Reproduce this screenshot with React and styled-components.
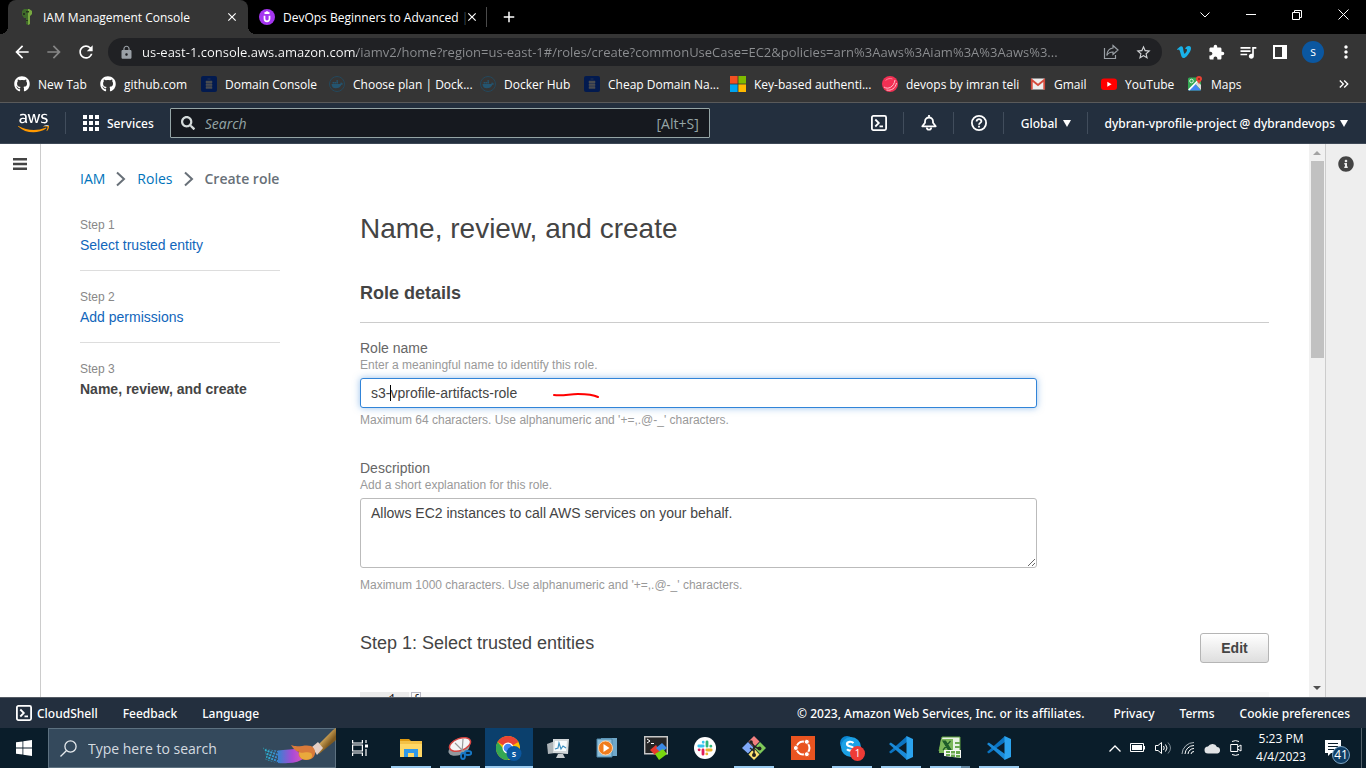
import React from "react";
import styled, { createGlobalStyle, css } from "styled-components";
import {
  MdArrowBack, MdArrowForward, MdRefresh, MdLock, MdStarBorder, MdExtension,
  MdQueueMusic, MdMoreVert, MdClose, MdAdd, MdKeyboardDoubleArrowRight,
} from "react-icons/md";
import { FaAws, FaGithub, FaVimeoV, FaInfoCircle, FaSearch } from "react-icons/fa";

const segoe = '"Open Sans", "Noto Sans", sans-serif';
const ember = '"Open Sans", "Noto Sans", sans-serif';
const emberMedium = '"Noto Sans", "Open Sans", sans-serif';
const arial = '"Liberation Sans", Arial, sans-serif';

const GlobalStyle = createGlobalStyle`
  *, *::before, *::after { box-sizing: border-box; }
  body { margin: 0; background: #fff; font-family: ${arial}; }
  button, input, textarea { font: inherit; color: inherit; margin: 0; }
  button { padding: 0; border: 0; background: none; cursor: pointer; }
  h1, h2, p { margin: 0; }
  svg { display: block; flex: none; }
`;

const Screen = styled.div`
  display: flex;
  flex-direction: column;
  height: 100vh;
  overflow: hidden;
`;

/* ---------- Browser chrome ---------- */

const TabStrip = styled.div`
  display: flex;
  align-items: stretch;
  height: 34px;
  padding-left: 8px;
  background: #000;
  color: #fff;
  font: 12px ${segoe};
`;

const Tab = styled.div`
  position: relative;
  display: flex;
  align-items: center;
  width: 240px;
  padding: 0 8px 0 11px;
  border-radius: 8px 8px 0 0;
  background: ${(p) => (p.$active ? "#353535" : "transparent")};
  > svg { margin-right: 8px; }
  ${(p) => p.$active && css`
    &::before, &::after {
      content: "";
      position: absolute;
      bottom: 0;
      width: 8px;
      height: 8px;
    }
    &::before { left: -8px; background: radial-gradient(circle at 0 0, transparent 8px, #353535 8px); }
    &::after { right: -8px; background: radial-gradient(circle at 100% 0, transparent 8px, #353535 8px); }
  `}
`;

const TabTitle = styled.span`
  flex: 1;
  min-width: 0;
  white-space: nowrap;
`;

const TitleTail = styled.span`
  color: #3c5058;
`;

const IconButton = styled.button`
  display: flex;
  align-items: center;
  justify-content: center;
  align-self: center;
  width: ${(p) => p.$w || 16}px;
  height: ${(p) => p.$w || 16}px;
  flex: none;
  color: ${(p) => p.$color || "#fff"};
`;

const TabDivider = styled.span`
  align-self: center;
  width: 1px;
  height: 20px;
  margin: 0 14px 0 -2px;
  background: #4a4a4a;
`;

const WindowControls = styled.div`
  display: flex;
  margin-left: auto;
  padding-bottom: 5px;
`;

const WindowButton = styled.button`
  display: flex;
  align-items: center;
  justify-content: center;
  width: 46px;
`;

const Toolbar = styled.div`
  display: flex;
  align-items: center;
  height: 34px;
  gap: 12px;
  padding: 2px 10px 0 12px;
  background: #353535;
`;

const AddressBar = styled.label`
  display: flex;
  align-items: center;
  flex: 1;
  min-width: 0;
  height: 28px;
  gap: 8px;
  padding: 0 10px 0 11px;
  border-radius: 14px;
  background: #202124;
  color: #9aa0a6;
`;

const AddressInput = styled.input`
  flex: 1;
  min-width: 0;
  padding: 0;
  border: 0;
  outline: 0;
  font: 13px/18px ${segoe};
  background: linear-gradient(90deg, #fff 215px, #8d8f92 215px);
  background-clip: text;
  -webkit-background-clip: text;
  -webkit-text-fill-color: transparent;
`;

const AddressActions = styled.span`
  display: flex;
  gap: 16px;
`;

const Extensions = styled.div`
  display: flex;
  align-items: center;
  gap: 12px;
`;

const Avatar = styled.button`
  width: 22px;
  height: 22px;
  border-radius: 50%;
  background: #0b57a0;
  color: #fff;
  font: 12px/22px ${segoe};
`;

const BookmarkBar = styled.nav`
  display: flex;
  align-items: center;
  justify-content: space-between;
  height: 35px;
  padding: 0 14px 2px;
  border-bottom: 1px solid #5a5a5a;
  background: #353535;
  color: #fff;
  font: 12px ${segoe};
`;

const Bookmarks = styled.div`
  display: flex;
`;

const Bookmark = styled.a`
  display: flex;
  align-items: center;
  gap: 8px;
  width: ${(p) => p.$w}px;
  flex: none;
  color: inherit;
  text-decoration: none;
  white-space: nowrap;
`;

/* ---------- AWS header ---------- */

const AwsHeader = styled.header`
  display: flex;
  align-items: center;
  height: 41px;
  flex: none;
  padding: 0 18px;
  border-bottom: 1px solid #3d4856;
  background: #232f3e;
  color: #fff;
  font: 500 12px ${emberMedium};
`;

const AwsMark = styled(FaAws)`
  width: 31px;
  height: 26px;
  path { fill: url(#awsFill); }
`;

const HeaderDivider = styled.span`
  width: 1px;
  height: 22px;
  margin: 0 17px 0 16px;
  background: #414d5c;
`;

const HeaderButton = styled.button`
  display: flex;
  align-items: center;
  gap: ${(p) => p.$gap || 5}px;
  height: 24px;
  white-space: nowrap;
`;

const ServiceSearch = styled.label`
  display: flex;
  align-items: center;
  gap: 10px;
  width: 540px;
  height: 30px;
  margin-left: 16px;
  padding: 0 10px;
  border: 1px solid #95a5a6;
  border-radius: 1px;
  background: #16191f;
  color: #95a5a6;
  font: 14px ${ember};
`;

const ServiceInput = styled.input`
  flex: 1;
  min-width: 0;
  padding: 0;
  border: 0;
  outline: 0;
  background: none;
  &::placeholder { color: #95a5a6; opacity: 1; font-style: italic; }
`;

const HeaderRight = styled.div`
  display: flex;
  align-items: center;
  margin-left: auto;
`;

/* ---------- Console body ---------- */

const Body = styled.div`
  display: flex;
  flex: 1;
  min-height: 0;
  overflow: hidden;
  background: #fff;
`;

const Rail = styled.aside`
  display: flex;
  flex-direction: column;
  align-items: center;
  flex: none;
  width: 41px;
  padding-top: 12px;
  background: ${(p) => (p.$right ? "#eee" : "#fff")};
  border: 0 solid #ccc;
  border-width: ${(p) => (p.$right ? "0 0 0 1px" : "0 1px 0 0")};
`;

const Main = styled.main`
  flex: 1;
  min-width: 0;
  overflow: hidden;
  padding: 24px 40px 0 39px;
  color: #444;
  font: 14px/20px ${arial};
`;

const Breadcrumbs = styled.nav`
  display: flex;
  align-items: center;
  gap: 11px;
  height: 22px;
  font-family: ${ember};
  color: #687078;
  a { color: #0073bb; text-decoration: none; }
  b { font-weight: 600; }
`;

const Columns = styled.div`
  display: flex;
  gap: 80px;
  padding-top: 25px;
`;

const Steps = styled.ol`
  flex: none;
  width: 200px;
  margin: 0;
  padding: 0;
  list-style: none;
`;

const Step = styled.li`
  display: flex;
  flex-direction: column;
  height: 56px;
  margin-bottom: 16px;
  border-bottom: ${(p) => (p.$last ? "0" : "1px solid #ddd")};
  small { font-size: 12px; color: #888; }
  a { color: #1166bb; text-decoration: none; }
`;

const Content = styled.div`
  flex: 1;
  min-width: 0;
`;

const PageTitle = styled.h1`
  font-size: 28px;
  line-height: 28px;
  font-weight: 400;
`;

const SectionTitle = styled.h2`
  margin-top: 40px;
  padding-bottom: 19px;
  border-bottom: 1px solid #ccc;
  font-size: 18px;
  line-height: 20px;
`;

const Field = styled.div`
  display: flex;
  flex-direction: column;
  width: 677px;
  max-width: 100%;
  margin-top: ${(p) => p.$top}px;
  label { color: #666; line-height: 17px; }
`;

const Hint = styled.p`
  margin: ${(p) => p.$top || 0}px 0 ${(p) => p.$bottom || 0}px;
  font-size: 12px;
  line-height: 16px;
  color: #999;
`;

const InputWrap = styled.div`
  position: relative;
`;

const TextInput = styled.input`
  display: block;
  width: 100%;
  height: 30px;
  padding: 0 10px;
  border: 1px solid #3184d8;
  border-radius: 3px;
  outline: 0;
  background: #fff;
  box-shadow: 0 0 7px rgba(49, 132, 216, 0.5);
`;

const Caret = styled.span`
  position: absolute;
  left: 30px;
  top: 7px;
  width: 1px;
  height: 16px;
  background: #000;
`;

const Underline = styled.svg`
  position: absolute;
  left: 192px;
  top: 12px;
`;

const TextArea = styled.textarea`
  display: block;
  width: 100%;
  height: 70px;
  padding: 4px 10px;
  border: 1px solid #bbb;
  border-radius: 3px;
  outline: 0;
  background: #fff;
  line-height: 20px;
  resize: vertical;
`;

const StepHeader = styled.div`
  display: flex;
  justify-content: space-between;
  margin-top: 40px;
  h2 { font-size: 18px; font-weight: 400; line-height: 20px; }
`;

const EditButton = styled.button`
  width: 69px;
  height: 30px;
  border: 1px solid #b5b5b5;
  border-radius: 3px;
  background: linear-gradient(#fff, #dedede);
  font-weight: 700;
  color: #444;
`;

const CodeBlock = styled.pre`
  display: flex;
  margin: 29px 0 0;
  background: #f9f9f9;
  font: 12px/16px "Liberation Mono", monospace;
  color: #222;
`;

const Gutter = styled.span`
  width: 49px;
  margin-right: 2px;
  padding-right: 13px;
  background: #ebebeb;
  text-align: right;
`;

const Bracket = styled.span`
  width: 10px;
  border: 1px solid #b9b9c4;
  text-align: center;
  line-height: 14px;
`;

const ScrollBar = styled.div`
  display: flex;
  flex-direction: column;
  align-items: center;
  justify-content: space-between;
  width: 16px;
  flex: none;
  padding: 7px 0;
  background: #f1f1f1;
`;

const ScrollTrack = styled.div`
  flex: 1;
  width: 13px;
  margin: 6px 0;
`;

const ScrollThumb = styled.div`
  height: 38%;
  background: #c1c1c1;
`;

/* ---------- AWS footer ---------- */

const AwsFooter = styled.footer`
  display: flex;
  align-items: center;
  flex: none;
  height: 31px;
  gap: 25px;
  padding: 0 16px;
  border-top: 1px solid #545b64;
  background: #232f3e;
  color: #fff;
  font: 500 12px ${emberMedium};
  white-space: nowrap;
  a { color: inherit; text-decoration: none; }
`;

const Copyright = styled.span`
  margin-left: auto;
  margin-right: 4px;
`;

/* ---------- Windows taskbar ---------- */

const TaskBar = styled.div`
  display: flex;
  flex: none;
  height: 40px;
  background: #0a1d2a;
  color: #fff;
  font: 12px ${segoe};
`;

const StartButton = styled.button`
  display: flex;
  align-items: center;
  justify-content: center;
  width: 48px;
`;

const TaskSearch = styled.label`
  position: relative;
  display: flex;
  align-items: center;
  gap: 11px;
  width: 288px;
  padding-left: 11px;
  border: 1px solid #5d7180;
  background: #34495c;
  font-size: 14px;
  color: #d5dbe0;
`;

const TaskInput = styled.input`
  flex: 1;
  min-width: 0;
  padding: 0;
  border: 0;
  outline: 0;
  background: none;
  &::placeholder { color: #d5dbe0; opacity: 1; }
`;

const SearchArt = styled.svg`
  position: absolute;
  right: -1px;
  top: -1px;
`;

const TaskButton = styled.button`
  position: relative;
  display: flex;
  align-items: center;
  justify-content: center;
  width: 48px;
  height: 40px;
  background: ${(p) => (p.$state === "active" ? "#0b406d" : "none")};
  ${(p) => p.$state && css`
    &::after {
      content: "";
      position: absolute;
      bottom: 0;
      left: ${p.$state === "active" ? 0 : 4}px;
      right: ${p.$state === "active" ? 0 : 4}px;
      height: 2px;
      background: ${p.$state === "split"
        ? "linear-gradient(90deg, #9acbf0 31px, #6488a3 31px)"
        : "#9acbf0"};
    }
  `}
`;

const Apps = styled.div`
  display: flex;
  gap: 1px;
  margin-left: 3px;
`;

const Tray = styled.div`
  display: flex;
  align-items: center;
  gap: 9px;
  margin-left: auto;
  padding-right: 4px;
`;

const Clock = styled.time`
  display: flex;
  flex-direction: column;
  width: 60px;
  text-align: center;
  line-height: 18px;
`;

const Notice = styled.button`
  position: relative;
  width: 32px;
  height: 40px;
  padding-left: 3px;
`;

const NoticeCount = styled.span`
  position: absolute;
  left: 12px;
  top: 18px;
  width: 18px;
  height: 18px;
  border: 1px solid #7fa6c4;
  border-radius: 50%;
  background: #0f3e66;
  font: 12px/16px ${segoe};
`;

const PeekLine = styled.span`
  width: 1px;
  height: 40px;
  background: #52606a;
`;

/* ---------- Drawings ---------- */

const KeyIcon = () => (
  <svg width="16" height="16" viewBox="0 0 16 16">
    <path d="M5 0h5l3 2v3l-2 2v8l-2 1-2-1V9H5L3 6V2z" fill="#3f6b2a" />
    <path d="M9 0h1l3 2v3l-2 2v8l-2 1z" fill="#78a840" />
    <path d="M7 2h3v1.500H7zM7 11h2v1H7zM4 4h2v2H4z" fill="#26331f" />
  </svg>
);

const UdemyIcon = () => (
  <svg width="16" height="16" viewBox="0 0 16 16">
    <circle cx="8" cy="8" r="8" fill="#a435f0" />
    <path d="M5.500 4.600 8 3.100l2.500 1.500M5.500 6.700v3.100a2.500 2.500 0 0 0 5 0V6.700" fill="none" stroke="#fff" strokeWidth="1.700" />
  </svg>
);

const ServerIcon = () => (
  <svg width="16" height="16" viewBox="0 0 16 16">
    <rect width="16" height="16" rx="2" fill="#021a4f" />
    <path d="M6.500 3h3M5 5h6v2H5zM5 7.800h6v2H5zM5 10.600h6v2H5z" fill="#4a4c50" stroke="#4a4c50" strokeWidth=".5" />
  </svg>
);

const DockerIcon = () => (
  <svg width="16" height="16" viewBox="0 0 16 16">
    <circle cx="8" cy="8" r="7.500" fill="none" stroke="#24485c" />
    <path d="M2.500 8h8.200c.8 0 1.200-.7 1-1.700.9.300 1.200.8 1.300 1.200.5-.1 1 0 1.300.2-.4.700-1 1-1.900 1-1 2.400-2.900 3.600-5.600 3.600C4 12.300 2.600 10.800 2.500 8zM3.600 6h1.600v1.500H3.600zM5.500 6h1.600v1.500H5.500zM7.400 6H9v1.500H7.400zM7.400 4.200H9v1.500H7.400z" fill="#245570" />
  </svg>
);

const MicrosoftIcon = () => (
  <svg width="16" height="16" viewBox="0 0 16 16">
    <path d="M0 0h7.600v7.600H0z" fill="#f25022" />
    <path d="M8.400 0H16v7.600H8.400z" fill="#7fba00" />
    <path d="M0 8.400h7.600V16H0z" fill="#00a4ef" />
    <path d="M8.400 8.400H16V16H8.400z" fill="#ffb900" />
  </svg>
);

const BallIcon = () => (
  <svg width="16" height="16" viewBox="0 0 16 16">
    <circle cx="8" cy="8" r="8" fill="#f23054" />
    <path d="M2 11c4 3 10 0 11-7M4.500 14c5 1 9-2 10-7" fill="none" stroke="#ffc2cc" />
    <path d="M3.500 4.500c2-2 5-2.500 7-1.500" fill="none" stroke="#ff7d93" />
  </svg>
);

const GmailIcon = () => (
  <svg width="16" height="16" viewBox="0 0 16 16">
    <rect x="1" y="2.500" width="14" height="11" rx="1" fill="#eee" />
    <path d="M1.800 13.500V4L8 9l6.200-5v9.500" fill="none" stroke="#d54b3d" strokeWidth="1.800" />
  </svg>
);

const YouTubeIcon = () => (
  <svg width="16" height="16" viewBox="0 0 16 16">
    <rect y="2.500" width="16" height="11.500" rx="3" fill="#f00" />
    <path d="M6.300 5.800v5l4.300-2.500z" fill="#fff" />
  </svg>
);

const MapsIcon = () => (
  <svg width="16" height="16" viewBox="0 0 16 16">
    <rect x="1" y="1.500" width="13" height="13" rx="1.500" fill="#34a853" />
    <path d="M1 14.500 8 7.500l6 7z" fill="#4285f4" />
    <path d="m1 13.500 12-12 1 1L2.500 14.500z" fill="#fff" />
    <path d="m8.500 8 5.500 6V9l-3-3z" fill="#ddd" />
    <circle cx="4.500" cy="5" r="1.800" fill="none" stroke="#d8f0dd" />
    <path d="M9 3a3 3 0 1 1 6 0c0 2-3 3-3 6 0-3-3-4-3-6z" fill="#ea4335" />
    <circle cx="12" cy="3" r="1" fill="#8c1d14" />
  </svg>
);

const ShareIcon = () => (
  <svg width="16" height="16" viewBox="0 0 16 16" fill="none" stroke="#9aa0a6" strokeWidth="1.200">
    <path d="M1.500 4v10.500h11V11" />
    <path d="M10 1.500 15 6l-5 4.500V8C7 8 5 9 3.800 11.500 4 7.500 6 4.500 10 4z" />
  </svg>
);

const SidePanelIcon = () => (
  <svg width="14" height="14" viewBox="0 0 14 14">
    <path fillRule="evenodd" d="M0 0h14v14H0zM2 2v10h7V2z" fill="#fff" />
  </svg>
);

const ShellIcon = () => (
  <svg width="16" height="16" viewBox="0 0 16 16" fill="none" stroke="#fff" strokeWidth="1.800">
    <rect x=".9" y=".9" width="14.200" height="14.200" rx="1.500" />
    <path d="m4.300 4.500 3.500 3.500-3.500 3.500M8.500 11.300h3.500" />
  </svg>
);

const BellIcon = () => (
  <svg width="16" height="16" viewBox="0 0 16 16" fill="none" stroke="#fff" strokeWidth="1.800" strokeLinejoin="round">
    <path d="M8 0v2M1.300 11.300h13.400L12 7.800V6.500a4 4 0 0 0-8 0v1.300z" />
    <path d="M5.800 12.500a2.200 2.200 0 0 0 4.400 0" />
  </svg>
);

const HelpIcon = () => (
  <svg width="16" height="16" viewBox="0 0 16 16" fill="none" stroke="#fff" strokeWidth="1.800">
    <circle cx="8" cy="8" r="7.100" />
    <path d="M5.600 6.400C5.600 3.300 10.500 3.500 10.400 6.300 10.300 7.900 8 7.900 8 9.800M8 10.800v1.800" />
  </svg>
);

const GridIcon = () => (
  <svg width="16" height="16" viewBox="0 0 16 16" fill="#fff">
    {[0, 6, 12].map((y) => [0, 6, 12].map((x) => (
      <rect key={`${x}-${y}`} x={x} y={y} width="4" height="4" />
    )))}
  </svg>
);

const CaretDown = () => (
  <svg width="8" height="7" viewBox="0 0 8 7"><path d="M0 0h8L4 7z" fill="#fff" /></svg>
);

const CrumbArrow = () => (
  <svg width="10" height="16" viewBox="0 0 10 16"><path d="m1 1.500 7 6.500-7 6.500" fill="none" stroke="currentColor" strokeWidth="2" /></svg>
);

const MenuIcon = () => (
  <svg width="14" height="12" viewBox="0 0 14 12"><path d="M0 1.200h14M0 6h14M0 10.800h14" stroke="#444" strokeWidth="2.400" /></svg>
);

const WindowsLogo = () => (
  <svg width="16" height="16" viewBox="0 0 16 16" fill="#fff">
    <path d="M0 2.300 6.500 1.400v6.200H0zM7.300 1.300 16 0v7.600H7.300zM0 8.400h6.500v6.200L0 13.700zM7.300 8.400H16V16l-8.700-1.300z" />
  </svg>
);

const Brush = () => (
  <SearchArt width="76" height="40" viewBox="0 0 76 40">
    <defs>
      <linearGradient id="paint"><stop offset="0" stopColor="#25c7d4" /><stop offset=".4" stopColor="#3f7fd0" /><stop offset=".7" stopColor="#a74bd6" /><stop offset="1" stopColor="#e558b8" /></linearGradient>
      <linearGradient id="handle" x1="0" y1="0" x2="1" y2="1"><stop offset=".35" stopColor="#e0b565" /><stop offset=".65" stopColor="#7f5a20" /></linearGradient>
      <pattern id="dots" width="3" height="3" patternUnits="userSpaceOnUse" patternTransform="rotate(20)"><rect width="2" height="2" fill="#fff" /></pattern>
      <mask id="dotMask"><rect width="22" height="40" fill="url(#dots)" /><rect x="18" width="58" height="40" fill="#fff" /></mask>
    </defs>
    <path mask="url(#dotMask)" d="M2 19c6 3 14 4 21 3l12-1 10 9c-5 3-10 5-17 5-9 1-17-1-23-4 2-2 2-2 0-4 2-3-1-5-3-8z" fill="url(#paint)" />
    <path d="M55 20 73 2l3-2v12L59 26z" fill="url(#handle)" />
    <path d="m52 19 6-5 5 6-6 7z" fill="#e4cfc6" />
    <path d="M31 17c7 3 14-1 20 1 6 3 5 11 0 13-8 3-14-2-12-7-4-1-6-4-8-7z" fill="#d97a3a" />
    <path d="M39 24c2 2 8-1 12 1 2 2 1 5-1 6-6 2-11 0-11-7z" fill="#eaa83c" />
  </SearchArt>
);

const TaskViewIcon = () => (
  <svg width="16" height="16" viewBox="0 0 16 16" fill="none" stroke="#fff" strokeWidth="1.200">
    <path d="M.6 0v3h9.800V0M.6 16v-3h9.800v3M.6 5h9.800v6H.6zM14 0v3M14 9v7" />
    <path d="M13 4.500h3v3h-3z" fill="#fff" stroke="none" />
  </svg>
);

const FolderIcon = () => (
  <svg width="24" height="24" viewBox="0 0 24 24">
    <path d="M1 3h9l2 2H1z" fill="#e09a10" /><path d="M1 5h22v16H1z" fill="#ffd765" />
    <path d="M1 5h22v3H1z" fill="#f4c146" />
    <path d="M5 21v-8h14v8h-4v-4H9v4z" fill="#3098e8" />
  </svg>
);

const SnipIcon = () => (
  <svg width="24" height="24" viewBox="0 0 24 24">
    <ellipse cx="11" cy="13" rx="11" ry="6" fill="#92999f" transform="rotate(-20 11 13)" />
    <ellipse cx="12" cy="8.500" rx="11" ry="6" fill="#f4f5f6" stroke="#d64541" strokeWidth="1.500" transform="rotate(-20 12 8.500)" />
    <path d="m7 7 10 10M15 3l-1 14" stroke="#999" strokeWidth="1.200" />
    <ellipse cx="20" cy="17" rx="3.300" ry="2" fill="none" stroke="#1778c6" strokeWidth="1.800" />
    <ellipse cx="15" cy="20" rx="2" ry="3" fill="none" stroke="#1778c6" strokeWidth="1.800" />
  </svg>
);

const ChromeIcon = () => (
  <svg width="26" height="26" viewBox="0 0 26 26">
    <circle cx="12" cy="13" r="12" fill="#fbbc04" />
    <path d="M12 13 1.600 7A12 12 0 0 1 22.400 7z" fill="#ea4335" />
    <path d="M12 13H6.800L1.600 7A12 12 0 0 0 12 25l4-7z" fill="#34a853" />
    <circle cx="12" cy="13" r="5.500" fill="#fff" /><circle cx="12" cy="13" r="4.300" fill="#4285f4" />
    <circle cx="18" cy="18.500" r="7.500" fill="#0b57a0" />
    <text x="18" y="21.500" textAnchor="middle" fontFamily="Open Sans" fontSize="9" fontWeight="600" fill="#fff">s</text>
  </svg>
);

const MonitorIcon = () => (
  <svg width="24" height="24" viewBox="0 0 24 24">
    <path d="M1 8 9 5v12l-7 1z" fill="#aeb5b9" /><path d="M7 3h16l-1 15-15-1z" fill="#d3d8da" />
    <path d="M9 5h12l-1 10H8z" fill="#f7fbfd" /><path d="m9 13 3-1 1-5 2 6 2-3 3 2" fill="none" stroke="#3b8fc0" strokeWidth="1.200" />
    <path d="M12 18h5l2 4H10z" fill="#c8cdd0" />
  </svg>
);

const MediaIcon = () => (
  <svg width="22" height="22" viewBox="0 0 22 22">
    <path d="M5 1h16v18H5z" fill="#6fa7c9" /><path d="M1 2h15v18H1z" fill="#8dc0dc" stroke="#4d86a8" />
    <circle cx="9.500" cy="11" r="7" fill="#f07c1c" stroke="#ffd2a8" /><path d="M7.500 7v8l6-4z" fill="#fff" />
  </svg>
);

const TerminalIcon = () => (
  <svg width="24" height="24" viewBox="0 0 24 24">
    <path d="M.7.700h22.600v17H.7z" fill="#262626" stroke="#c8c8c8" strokeWidth="1.400" />
    <path d="m3 3 3 2-3 2M7 7.500h3" stroke="#fff" fill="none" />
    <path d="m6 14 6-5 4 6-5 4z" fill="#e8392c" /><path d="m12 12 6-5 5 5-6 5z" fill="#3c8ae6" /><path d="m11 18 8-5 4 5-8 6z" fill="#79d70f" />
  </svg>
);

const SlackIcon = () => (
  <svg width="22" height="22" viewBox="0 0 22 22">
    <circle cx="11" cy="11" r="11" fill="#fff" />
    <g strokeWidth="2.800" strokeLinecap="round">
      <path d="M4.800 9h4.400M9.200 5.200v.1" stroke="#36c5f0" /><path d="M13 4.800v4.400M16.800 9.200h.1" stroke="#2eb67d" />
      <path d="M9 12.800v4.400M5.200 12.800h-.1" stroke="#e01e5a" /><path d="M12.800 13h4.400M12.800 16.800v.1" stroke="#ecb22e" />
    </g>
  </svg>
);

const GitIcon = () => (
  <svg width="24" height="24" viewBox="0 0 24 24">
    <path d="m12 0 5.500 5.500L12 11 6.500 5.500z" fill="#f28080" /><path d="m6 6 5.500 5.500L6 17.500 0 12z" fill="#7fa8f8" />
    <path d="m18 6 6 6-6 6-5.500-6z" fill="#7fc95a" /><path d="m12 12.500 5.500 6L12 24l-5.500-5.500z" fill="#fbe070" />
    <path d="M9 6l3 4v9M12 10l5 3M12 15l-4-3" stroke="#222" fill="none" strokeWidth="1.500" />
    <g fill="#222"><circle cx="9" cy="6" r="1.800" /><circle cx="12" cy="19" r="2" /><circle cx="17.500" cy="12.500" r="2" /></g>
  </svg>
);

const UbuntuIcon = () => (
  <svg width="24" height="24" viewBox="0 0 24 24">
    <rect width="24" height="24" fill="#e95420" />
    <circle cx="12" cy="12" r="6.500" fill="none" stroke="#fff" strokeWidth="2" />
    <g fill="#fff" stroke="#e95420" strokeWidth="1"><circle cx="4.800" cy="12" r="2.500" /><circle cx="15.800" cy="5.800" r="2.500" /><circle cx="15.800" cy="18.200" r="2.500" /></g>
  </svg>
);

const SkypeIcon = () => (
  <svg width="26" height="26" viewBox="0 0 26 26">
    <circle cx="8" cy="8" r="7" fill="#0b84cf" /><circle cx="16" cy="16" r="7" fill="#1490df" /><circle cx="12" cy="12" r="10" fill="#1ba1e6" />
    <path d="M14.500 8c-2-2-6.500-1.500-6.500 1 0 3.500 6.500 1.500 6.500 4.500 0 2.500-4.500 3-6.500.8" fill="none" stroke="#fff" strokeWidth="2.200" />
    <circle cx="18.500" cy="18.500" r="7.500" fill="#ef3b36" />
    <text x="18.500" y="22" textAnchor="middle" fontFamily="Open Sans" fontSize="10" fill="#fff">1</text>
  </svg>
);

const VsCodeIcon = () => (
  <svg width="24" height="24" viewBox="0 0 24 24">
    <path d="m0 16 1.800 1.600L18 6V0z" fill="#0b74c2" />
    <path d="M0 8 1.800 6.400 18 18v6z" fill="#1a8ad8" />
    <path d="m17.500 0 6.500 3v18l-6.500 3z" fill="#2ba3ee" />
  </svg>
);

const ExcelIcon = () => (
  <svg width="24" height="24" viewBox="0 0 24 24">
    <path d="M4 1h18v14H1z" fill="#e8f2e4" stroke="#5da03c" /><path d="M3 3h12v14H1z" fill="#7cb85a" />
    <path d="M5 5h2.500l5.500 9h-2.500zM12.500 5 5 14" fill="#1e5d2a" stroke="#1e5d2a" strokeWidth="1.200" />
    <path d="M6 14h17v8l-17-2z" fill="#f6f9f4" /><path d="M8 15h4v2H8zM13 15h4v2.500h-4zM18 15h4v3h-4zM8 18h4v2H8zM13 18.500h4V21h-4zM18 19h4v2.500h-4zM17 6h5v2h-5zM17 10h5v2h-5z" fill="#6aa84f" />
  </svg>
);

/* ---------- Data ---------- */

const bookmarks = [
  { name: "New Tab", w: 86, icon: <FaGithub size={16} /> },
  { name: "github.com", w: 101, icon: <FaGithub size={16} /> },
  { name: "Domain Console", w: 128, icon: <ServerIcon /> },
  { name: "Choose plan | Dock...", w: 151, icon: <DockerIcon /> },
  { name: "Docker Hub", w: 104, icon: <DockerIcon /> },
  { name: "Cheap Domain Na...", w: 146, icon: <ServerIcon /> },
  { name: "Key-based authenti...", w: 152, icon: <MicrosoftIcon /> },
  { name: "devops by imran teli", w: 148, icon: <BallIcon /> },
  { name: "Gmail", w: 71, icon: <GmailIcon /> },
  { name: "YouTube", w: 86, icon: <YouTubeIcon /> },
  { name: "Maps", w: 60, icon: <MapsIcon /> },
];

const steps = [
  { label: "Step 1", name: "Select trusted entity" },
  { label: "Step 2", name: "Add permissions" },
  { label: "Step 3", name: "Name, review, and create", current: true },
];

const apps = [
  { name: "File Explorer", icon: <FolderIcon />, state: "open" },
  { name: "Snipping Tool", icon: <SnipIcon />, state: "open" },
  { name: "Chrome", icon: <ChromeIcon />, state: "active" },
  { name: "Resource Monitor", icon: <MonitorIcon /> },
  { name: "Media Player", icon: <MediaIcon /> },
  { name: "Terminal", icon: <TerminalIcon /> },
  { name: "Slack", icon: <SlackIcon /> },
  { name: "Git", icon: <GitIcon />, state: "open" },
  { name: "Ubuntu", icon: <UbuntuIcon /> },
  { name: "Skype", icon: <SkypeIcon />, state: "open" },
  { name: "VS Code", icon: <VsCodeIcon />, state: "open" },
  { name: "Excel", icon: <ExcelIcon />, state: "split" },
  { name: "VS Code", icon: <VsCodeIcon />, state: "open" },
];

/* ---------- Page ---------- */

function Browser() {
  return (
    <>
      <TabStrip>
        <Tab $active>
          <KeyIcon />
          <TabTitle>IAM Management Console</TabTitle>
          <IconButton aria-label="Close tab"><MdClose size={14} /></IconButton>
        </Tab>
        <Tab>
          <UdemyIcon />
          <TabTitle>DevOps Beginners to Advanced<TitleTail> |</TitleTail></TabTitle>
          <IconButton aria-label="Close tab"><MdClose size={14} /></IconButton>
        </Tab>
        <TabDivider />
        <IconButton aria-label="New tab"><MdAdd size={18} /></IconButton>
        <WindowControls>
          <WindowButton aria-label="Search tabs"><svg width="10" height="6" viewBox="0 0 10 6"><path d="m.5.500 4.500 4.500L9.500.500" fill="none" stroke="#fff" /></svg></WindowButton>
          <WindowButton aria-label="Minimize"><svg width="10" height="1"><path d="M0 .5h10" stroke="#fff" /></svg></WindowButton>
          <WindowButton aria-label="Restore"><svg width="10" height="10" viewBox="0 0 10 10"><path d="M.5 2.500h7v7h-7zM2.500 2.500v-2h7v7h-2" fill="none" stroke="#fff" /></svg></WindowButton>
          <WindowButton aria-label="Close"><svg width="11" height="11" viewBox="0 0 11 11"><path d="m.5.500 10 10m0-10-10 10" stroke="#fff" /></svg></WindowButton>
        </WindowControls>
      </TabStrip>
      <Toolbar>
        <IconButton $w={20} aria-label="Back"><MdArrowBack size={20} /></IconButton>
        <IconButton $w={20} $color="#868686" aria-label="Forward"><MdArrowForward size={20} /></IconButton>
        <IconButton $w={20} aria-label="Reload"><MdRefresh size={20} /></IconButton>
        <AddressBar>
          <MdLock size={15} />
          <AddressInput
            aria-label="Address"
            defaultValue="us-east-1.console.aws.amazon.com/iamv2/home?region=us-east-1#/roles/create?commonUseCase=EC2&policies=arn%3Aaws%3Aiam%3A%3Aaws%3..."
          />
          <AddressActions>
            <ShareIcon />
            <MdStarBorder size={17} color="#d0d2d4" />
          </AddressActions>
        </AddressBar>
        <Extensions>
          <IconButton $w={20} $color="#19b1e8" aria-label="Vimeo"><FaVimeoV size={16} /></IconButton>
          <IconButton $w={20} aria-label="Extensions"><MdExtension size={17} /></IconButton>
          <IconButton $w={20} aria-label="Media"><MdQueueMusic size={20} /></IconButton>
          <IconButton $w={20} aria-label="Side panel"><SidePanelIcon /></IconButton>
          <Avatar aria-label="Profile">s</Avatar>
          <IconButton $w={20} aria-label="Menu"><MdMoreVert size={20} /></IconButton>
        </Extensions>
      </Toolbar>
      <BookmarkBar>
        <Bookmarks>
          {bookmarks.map((b) => (
            <Bookmark key={b.name} href="#" $w={b.w}>{b.icon}{b.name}</Bookmark>
          ))}
        </Bookmarks>
        <IconButton aria-label="More bookmarks"><MdKeyboardDoubleArrowRight size={16} /></IconButton>
      </BookmarkBar>
    </>
  );
}

function Header() {
  return (
    <AwsHeader>
      <AwsMark />
      <svg width="0" height="0">
        <linearGradient id="awsFill" x1="0" y1="0" x2="0" y2="1">
          <stop offset=".66" stopColor="#fff" /><stop offset=".66" stopColor="#f90" />
        </linearGradient>
      </svg>
      <HeaderDivider />
      <HeaderButton $gap={8}><GridIcon />Services</HeaderButton>
      <ServiceSearch>
        <FaSearch size={14} color="#d5dbdb" />
        <ServiceInput placeholder="Search" aria-label="Search services" />
        <span>[Alt+S]</span>
      </ServiceSearch>
      <HeaderRight>
        <HeaderButton aria-label="CloudShell"><ShellIcon /></HeaderButton>
        <HeaderDivider />
        <HeaderButton aria-label="Notifications"><BellIcon /></HeaderButton>
        <HeaderDivider />
        <HeaderButton aria-label="Help"><HelpIcon /></HeaderButton>
        <HeaderDivider />
        <HeaderButton>Global<CaretDown /></HeaderButton>
        <HeaderDivider />
        <HeaderButton>dybran-vprofile-project @ dybrandevops<CaretDown /></HeaderButton>
      </HeaderRight>
    </AwsHeader>
  );
}

function CreateRole() {
  return (
    <Main>
      <Breadcrumbs aria-label="Breadcrumb">
        <a href="#">IAM</a><CrumbArrow /><a href="#">Roles</a><CrumbArrow /><b>Create role</b>
      </Breadcrumbs>
      <Columns>
        <Steps>
          {steps.map((s) => (
            <Step key={s.label} $last={s.current}>
              <small>{s.label}</small>
              {s.current ? <b>{s.name}</b> : <a href="#">{s.name}</a>}
            </Step>
          ))}
        </Steps>
        <Content>
          <PageTitle>Name, review, and create</PageTitle>
          <SectionTitle>Role details</SectionTitle>
          <Field $top={17}>
            <label htmlFor="role-name">Role name</label>
            <Hint $bottom={5}>Enter a meaningful name to identify this role.</Hint>
            <InputWrap>
              <TextInput id="role-name" defaultValue="s3-vprofile-artifacts-role" />
              <Caret />
              <Underline width="50" height="10" viewBox="0 0 50 10">
                <path d="M2 5c10 1 15-1 24-1 8 0 14 0 20 3" fill="none" stroke="#f00" strokeWidth="2" strokeLinecap="round" />
              </Underline>
            </InputWrap>
            <Hint $top={4}>Maximum 64 characters. Use alphanumeric and '+=,.@-_' characters.</Hint>
          </Field>
          <Field $top={32}>
            <label htmlFor="role-description">Description</label>
            <Hint $bottom={5}>Add a short explanation for this role.</Hint>
            <TextArea id="role-description" defaultValue="Allows EC2 instances to call AWS services on your behalf." />
            <Hint $top={9}>Maximum 1000 characters. Use alphanumeric and '+=,.@-_' characters.</Hint>
          </Field>
          <StepHeader>
            <h2>Step 1: Select trusted entities</h2>
            <EditButton>Edit</EditButton>
          </StepHeader>
          <CodeBlock><Gutter>1</Gutter><Bracket>{"{"}</Bracket></CodeBlock>
        </Content>
      </Columns>
    </Main>
  );
}

export default function App() {
  return (
    <Screen>
      <GlobalStyle />
      <Browser />
      <Header />
      <Body>
        <Rail>
          <IconButton aria-label="Open navigation"><MenuIcon /></IconButton>
        </Rail>
        <CreateRole />
        <ScrollBar aria-hidden="true">
          <svg width="8" height="4"><path d="M0 4 4 0l4 4z" fill="#a3a3a3" /></svg>
          <ScrollTrack><ScrollThumb /></ScrollTrack>
          <svg width="8" height="4"><path d="M0 0h8L4 4z" fill="#505050" /></svg>
        </ScrollBar>
        <Rail $right>
          <IconButton aria-label="Info"><FaInfoCircle size={16} color="#444" /></IconButton>
        </Rail>
      </Body>
      <AwsFooter>
        <HeaderButton><ShellIcon />CloudShell</HeaderButton>
        <HeaderButton>Feedback</HeaderButton>
        <HeaderButton>Language</HeaderButton>
        <Copyright>© 2023, Amazon Web Services, Inc. or its affiliates.</Copyright>
        <a href="#">Privacy</a>
        <a href="#">Terms</a>
        <a href="#">Cookie preferences</a>
      </AwsFooter>
      <TaskBar>
        <StartButton aria-label="Start"><WindowsLogo /></StartButton>
        <TaskSearch>
          <svg width="17" height="17" viewBox="0 0 17 17" fill="none" stroke="#e6eaed" strokeWidth="1.300"><circle cx="10.500" cy="6.500" r="5.600" /><path d="M6.300 10.700.500 16.500" /></svg>
          <TaskInput placeholder="Type here to search" aria-label="Type here to search" />
          <Brush />
        </TaskSearch>
        <TaskButton aria-label="Task view"><TaskViewIcon /></TaskButton>
        <Apps>
          {apps.map((a, i) => (
            <TaskButton key={i} aria-label={a.name} $state={a.state}>{a.icon}</TaskButton>
          ))}
        </Apps>
        <Tray>
          <svg width="12" height="7" viewBox="0 0 12 7"><path d="m.5 6.500 5.500-5.500 5.500 5.500" fill="none" stroke="#fff" strokeWidth="1.300" /></svg>
          <svg width="16" height="10" viewBox="0 0 16 10"><path d="M.5.500h13v8H.5zM14.500 3v3.500" fill="none" stroke="#fff" /><path d="M2 2h10v5H2z" fill="#fff" /></svg>
          <svg width="17" height="14" viewBox="0 0 17 14" fill="none" stroke="#fff"><path d="M.5 4.500H3L6.500 1.500v11L3 9.500H.5zM8.500 5q1.500 2 0 4M10.500 3.500q3 3.500 0 7" /><path d="M13 1.500q5 5.500 0 11" stroke="#7b8992" /></svg>
          <svg width="14" height="14" viewBox="0 0 14 14" fill="none" stroke="#fff"><path d="M1 13A12 12 0 0 1 13 1.500" stroke="#aab3b9" /><path d="M4 13a9 9 0 0 1 9-8.500M7 13a6 6 0 0 1 6-5.500M10 13a3 3 0 0 1 3-2.500" /></svg>
          <svg width="17" height="11" viewBox="0 0 17 11"><path d="M4 10.500a3.500 3.500 0 0 1 0-7A5 5 0 0 1 13 4a3.300 3.300 0 0 1 .5 6.500z" fill="#e2e4e6" /></svg>
          <svg width="12" height="16" viewBox="0 0 12 16" fill="none" stroke="#fff"><path d="M.7 4.500h7v7h-7zM7.700 7l3.300-2v6L7.700 9M2 1.500q3.500-1.800 7 0M2 14.500q3.500 1.800 7 0" /></svg>
          <Clock><span>5:23 PM</span><span>4/4/2023</span></Clock>
          <Notice aria-label="41 notifications">
            <svg width="18" height="40" viewBox="0 0 18 40"><path d="M2 12h16v13H8l-3 3v-3H2z" fill="#fff" /><path d="M5 15.500h10M5 18.500h10M5 21.500h7" stroke="#0a1d2a" /></svg>
            <NoticeCount>41</NoticeCount>
          </Notice>
          <PeekLine />
        </Tray>
      </TaskBar>
    </Screen>
  );
}
